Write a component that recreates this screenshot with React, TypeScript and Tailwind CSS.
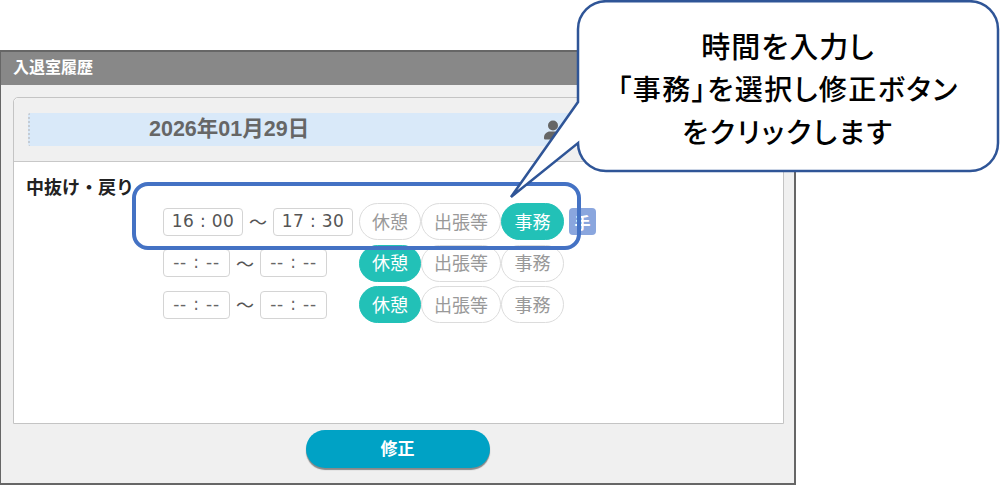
const jp = "font-['DejaVu_Sans','Noto_Sans_CJK_JP',sans-serif]";

function TimeBox({ v, wide }: { v: string; wide?: boolean }) {
  return (
    <div className={`${wide ? "w-[80px] text-[17px] text-[#555] tracking-[0.4px]" : "w-[67px] text-[17px] text-[#666] tracking-[0.8px]"} h-[28px] flex items-center justify-center bg-white border border-[#d4d4d4] rounded-[4px] whitespace-pre`}>
      {v}
    </div>
  );
}

function Pill({ label, w, on }: { label: string; w: string; on?: boolean }) {
  return (
    <div className={`${w} h-[37px] pb-[1px] shrink-0 flex items-center justify-center rounded-full text-[18px] font-['Noto_Sans_CJK_JP',sans-serif] ${on ? "bg-[#22c1b7] text-white border border-[#22c1b7]" : "bg-white text-[#999] border border-[#dcdcdc]"}`}>
      {label}
    </div>
  );
}

function Row({ from, to, active, wide, badge }: { from: string; to: string; active: string; wide?: boolean; badge?: boolean }) {
  return (
    <div className="flex items-center h-[37px]">
      <div className="flex items-center w-[196px]">
        <TimeBox v={from} wide={wide} />
        <span className="w-[30px] text-center text-[18px] text-[#555] font-['Noto_Sans_CJK_JP',sans-serif]">〜</span>
        <TimeBox v={to} wide={wide} />
      </div>
      <Pill label="休憩" w="w-[62px]" on={active === "休憩"} />
      <Pill label="出張等" w="w-[80px]" on={active === "出張等"} />
      <Pill label="事務" w="w-[63px]" on={active === "事務"} />
      {badge && (
        <div className="ml-[5px] w-[27px] h-[27px] rounded-[4px] bg-[#8aa6de] text-white text-[16px] font-bold flex items-center justify-center font-['Noto_Sans_CJK_JP',sans-serif]">手</div>
      )}
    </div>
  );
}

export default function App() {
  return (
    <div className={`relative w-[1000px] h-[485px] bg-white overflow-hidden ${jp}`}>
      <div className="h-[50px]" />
      <div className="w-[796px] h-[435px] border-2 border-[#666] border-l-[1px] bg-[#f0f0f0] flex flex-col">
        <div className="h-[33px] bg-[#888] text-white text-[16px] font-bold flex items-center pl-[12px] pb-[5px] shrink-0 font-['Noto_Sans_CJK_JP',sans-serif]">入退室履歴</div>
        <div className="h-[12px] shrink-0" />
        <div className="ml-[12px] mr-[10px] h-[327px] shrink-0 rounded-t-[5px] border border-[#c4c4c4] bg-white flex flex-col">
          <div className="h-[64px] bg-[#f0f0f0] border-b border-[#c8c8c8] rounded-t-[5px] flex items-center px-[14px] shrink-0">
            <div className="w-full h-[33px] bg-[#d9e9f9] border-l-2 border-dotted border-[#c5ccd4] rounded-[2px] relative flex items-center">
              <span className="ml-[119px] text-[21.500px] font-bold text-[#666] font-['Liberation_Sans','Noto_Sans_CJK_JP',sans-serif]">2026年01月29日</span>
              <svg className="absolute left-[514px] top-[7px]" width="18" height="20" viewBox="0 0 18 20" fill="#666">
                <circle cx="9" cy="5.500" r="5" />
                <path d="M1 19.500c-1 0-1-1-1-2 0-3.500 3-6 6-6h6c3 0 6 2.500 6 6 0 1 0 2-1 2z" />
              </svg>
            </div>
          </div>
          <div className="pl-[12px] pt-[13px]">
            <div className="text-[18px] font-bold text-[#222] leading-[22px] font-['Noto_Sans_CJK_JP',sans-serif]">中抜け・戻り</div>
            <div className="pl-[137px] pt-[6px] flex flex-col gap-[4.500px]">
              <Row from="16 : 00" to="17 : 30" active="事務" wide badge />
              <Row from="-- : --" to="-- : --" active="休憩" />
              <Row from="-- : --" to="-- : --" active="休憩" />
            </div>
          </div>
        </div>
        <div className="flex justify-center pt-[6px]">
          <button className="w-[184px] h-[38px] pb-[2px] rounded-full bg-[#00a2c5] shadow-[0_2px_1px_#888] text-white text-[17px] font-bold font-['Noto_Sans_CJK_JP',sans-serif]">修正</button>
        </div>
      </div>

      <div className="absolute left-[132px] top-[182px] w-[449px] h-[68px] border-[4px] border-[#4472c4] rounded-[16px]" />

      <svg className="absolute left-0 top-0 pointer-events-none" width="1000" height="485" viewBox="0 0 1000 485">
        <path
          d="M606 1.200H970a28 28 0 0 1 28 28V143a28 28 0 0 1-28 28H606a28 28 0 0 1-28-28L511 197 578 102V29.200a28 28 0 0 1 28-28z"
          fill="#fff"
          stroke="#2f5597"
          strokeWidth="2.500"
          strokeLinejoin="miter"
        />
      </svg>
      <div className="absolute left-[578px] top-[24px] w-[420px] flex flex-col items-center leading-[43px] text-black font-medium font-['Noto_Sans_CJK_JP',sans-serif] [font-feature-settings:'palt']">
        <div className="text-[29px] tracking-[1px]">時間を入力し</div>
        <div className="text-[28px] tracking-[1.500px]">「事務」を選択し修正ボタン</div>
        <div className="text-[28px] tracking-[2px]">をクリックします</div>
      </div>
    </div>
  );
}
